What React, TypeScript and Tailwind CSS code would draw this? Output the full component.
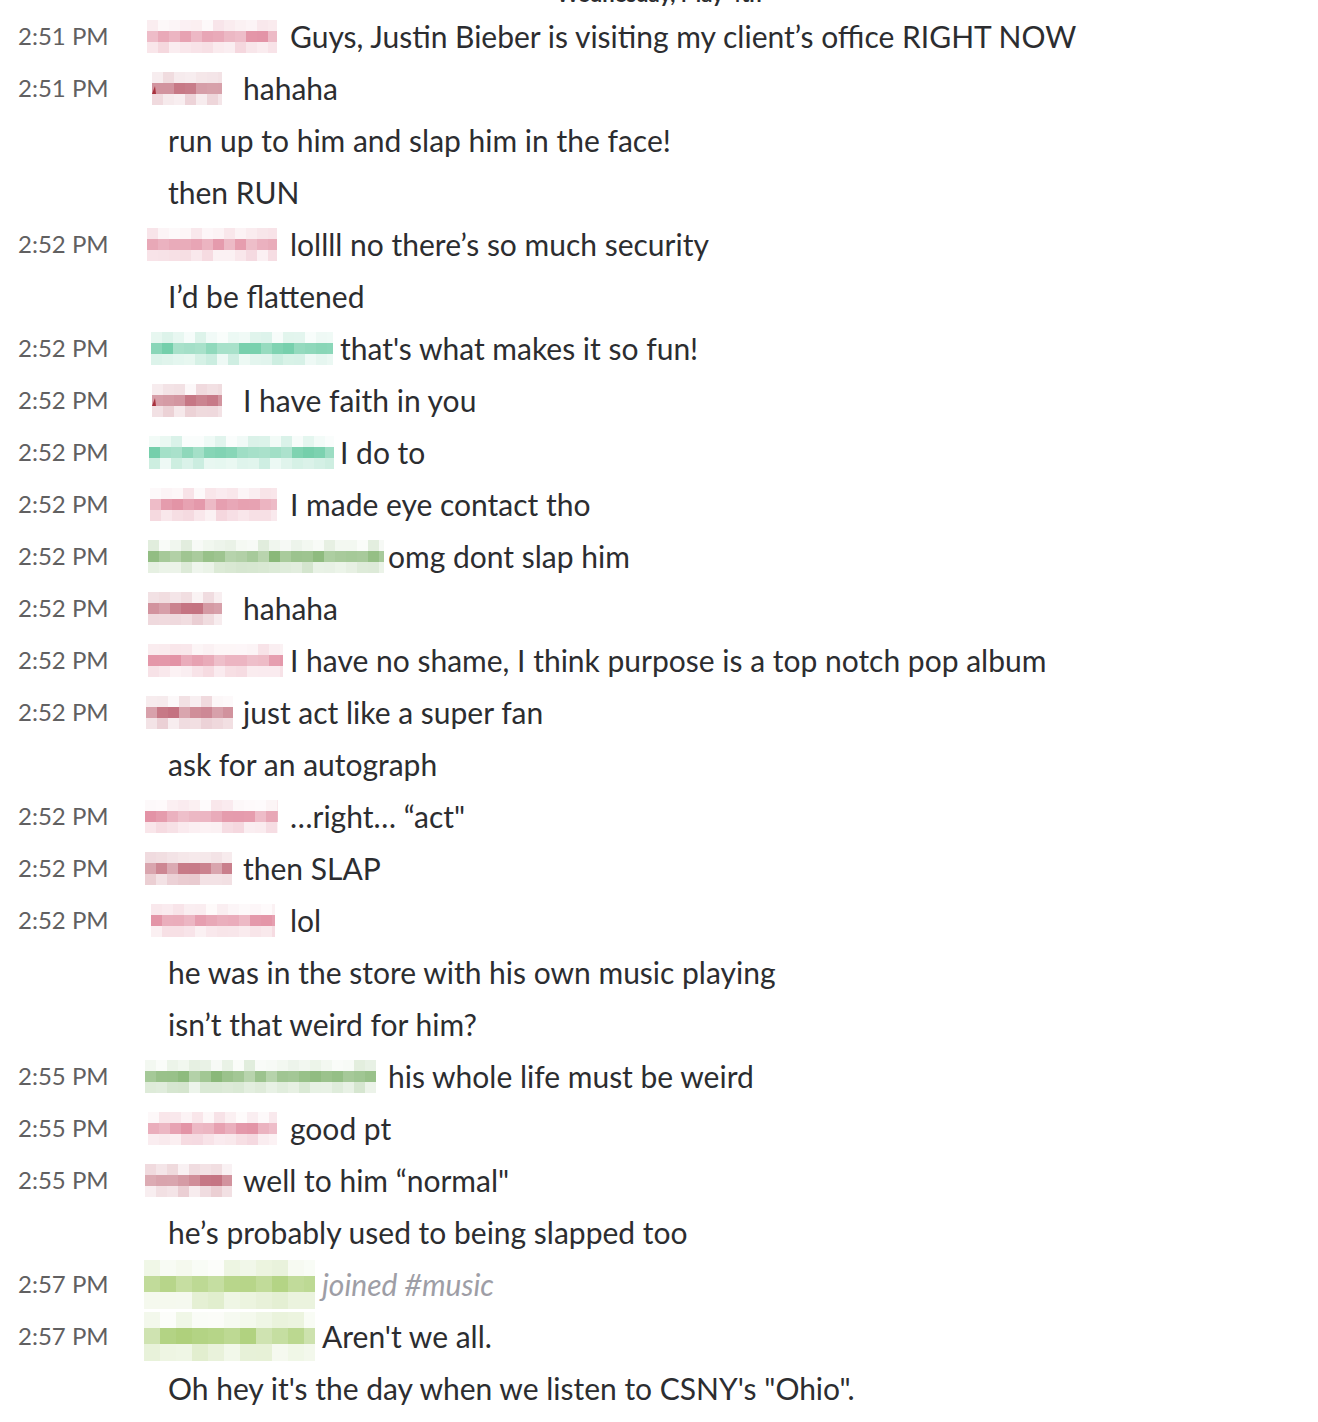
import React from 'react';

type Tone = 'pink' | 'rose' | 'teal' | 'green' | 'lime';

type Msg = {
  time?: string;
  // blurred name block: left edge, width (page px)
  block?: [number, number, Tone];
  textX?: number;
  text: string;
  mark?: boolean;
  muted?: boolean;
};

const tones: Record<Tone, [number, number, number]> = {
  pink: [222, 128, 150],
  rose: [185, 88, 105],
  teal: [90, 198, 155],
  green: [118, 172, 98],
  lime: [160, 200, 100],
};

const rows: Msg[] = [
  {time: '2:51 PM', block: [147, 130, 'pink'], textX: 290, text: 'Guys, Justin Bieber is visiting my client’s office RIGHT NOW'},
  {time: '2:51 PM', block: [152, 70, 'rose'], textX: 243, text: 'hahaha', mark: true},
  {text: 'run up to him and slap him in the face!'},
  {text: 'then RUN'},
  {time: '2:52 PM', block: [147, 130, 'pink'], textX: 290, text: 'lollll no there’s so much security'},
  {text: 'I’d be flattened'},
  {time: '2:52 PM', block: [151, 182, 'teal'], textX: 340, text: "that's what makes it so fun!"},
  {time: '2:52 PM', block: [152, 70, 'rose'], textX: 243, text: 'I have faith in you', mark: true},
  {time: '2:52 PM', block: [149, 185, 'teal'], textX: 340, text: 'I do to'},
  {time: '2:52 PM', block: [150, 127, 'pink'], textX: 290, text: 'I made eye contact tho'},
  {time: '2:52 PM', block: [148, 236, 'green'], textX: 388, text: 'omg dont slap him'},
  {time: '2:52 PM', block: [148, 74, 'rose'], textX: 243, text: 'hahaha'},
  {time: '2:52 PM', block: [148, 135, 'pink'], textX: 290, text: 'I have no shame, I think purpose is a top notch pop album'},
  {time: '2:52 PM', block: [146, 87, 'rose'], textX: 243, text: 'just act like a super fan'},
  {text: 'ask for an autograph'},
  {time: '2:52 PM', block: [145, 133, 'pink'], textX: 290, text: '…right… “act"'},
  {time: '2:52 PM', block: [145, 87, 'rose'], textX: 243, text: 'then SLAP'},
  {time: '2:52 PM', block: [151, 124, 'pink'], textX: 290, text: 'lol'},
  {text: 'he was in the store with his own music playing'},
  {text: 'isn’t that weird for him?'},
  {time: '2:55 PM', block: [145, 231, 'green'], textX: 388, text: 'his whole life must be weird'},
  {time: '2:55 PM', block: [148, 129, 'pink'], textX: 290, text: 'good pt'},
  {time: '2:55 PM', block: [145, 87, 'rose'], textX: 243, text: 'well to him “normal"'},
  {text: 'he’s probably used to being slapped too'},
  {time: '2:57 PM', block: [144, 171, 'lime'], textX: 322, text: 'joined #music', muted: true},
  {time: '2:57 PM', block: [144, 171, 'lime'], textX: 322, text: "Aren't we all."},
  {text: 'Oh hey it\'s the day when we listen to CSNY\'s "Ohio".'},
];

// small seeded rng so the mosaic is the same on every render
function rng(seed: number) {
  let s = seed * 9301 + 49297;
  return () => {
    s = (s * 9301 + 49297) % 233280;
    return s / 233280;
  };
}

function Mosaic({x, w, tone, width, seed, mark}: {x: number; w: number; tone: Tone; width: number; seed: number; mark?: boolean}) {
  const [r, g, b] = tones[tone];
  const cell = tone === 'lime' ? 16 : 11;
  const h = tone === 'lime' ? 50 : 33;
  const rand = rng(seed + 7);
  const left = x - 140;
  const cols = Math.ceil(w / cell);
  const cells = [];
  for (let row = 0; row < 3; row++) {
    for (let c = 0; c < cols; c++) {
      const cx = left + c * cell;
      const cw = Math.min(cell, left + w - cx);
      const base = row === 1 ? 0.5 + rand() * 0.35 : row === 2 ? 0.1 + rand() * 0.22 : 0.03 + rand() * 0.2;
      cells.push(
        <rect key={`${row}-${c}`} x={cx} y={row * cell + (tone === 'lime' ? 1 : 0)} width={cw} height={row === 2 ? h - 2 * cell : cell} fill={`rgb(${r},${g},${b})`} fillOpacity={base} />
      );
    }
  }
  return (
    <svg width={width} height={h} className="shrink-0">
      {cells}
      {mark && <polygon points={`${left},${2 * cell} ${left + 3},${cell + 3} ${left + 4},${2 * cell}`} fill="#a8323e" />}
    </svg>
  );
}

export default function App() {
  return (
    <div className="w-[1318px] h-[1422px] overflow-hidden bg-white font-['Lato','Liberation_Sans',sans-serif] text-[#2c2d30]">
      <div className="h-[10px] overflow-hidden flex justify-center items-end">
        <span className="text-[22px] font-bold leading-[22px] mb-[5px] text-[#2c2d30]">Wednesday, May 4th</span>
      </div>
      {rows.map((m, i) =>
        m.time ? (
          <div key={i} className="flex items-center h-[52px]">
            <div className="w-[140px] shrink-0 pl-[18px] text-[24px] text-[#616061] leading-none">{m.time}</div>
            {m.block && <Mosaic x={m.block[0]} w={m.block[1]} tone={m.block[2]} width={(m.textX ?? 290) - 140} seed={i} mark={m.mark} />}
            <div className={m.muted ? 'text-[30px] italic text-[#9e9ea6] leading-none whitespace-nowrap' : 'text-[30px] leading-none whitespace-nowrap'}>{m.text}</div>
          </div>
        ) : (
          <div key={i} className="flex items-center h-[52px] pl-[168px] text-[30px] leading-none whitespace-nowrap">
            {m.text}
          </div>
        )
      )}
    </div>
  );
}
